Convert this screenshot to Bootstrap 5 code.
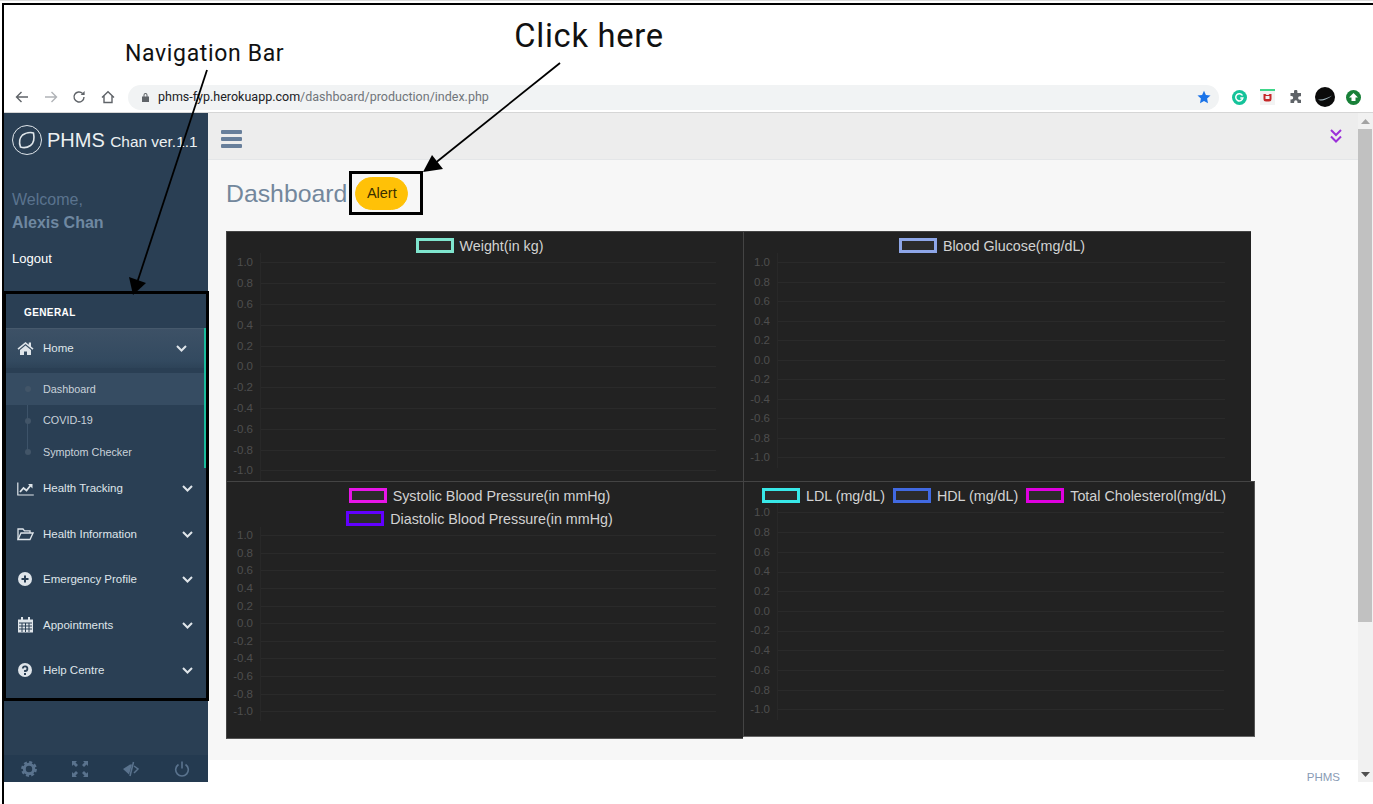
<!DOCTYPE html>
<html lang="en">
<head>
  <meta charset="UTF-8" />
  <meta name="viewport" content="width=device-width, initial-scale=1" />
  <title>PHMS Dashboard</title>
  <link href="https://cdn.jsdelivr.net/npm/bootstrap@5.3.3/dist/css/bootstrap.min.css" rel="stylesheet" />
  <style>
    html,body{height:804px;overflow:hidden;background:#fff;}
    body{font-family:"Liberation Sans",Arial,sans-serif;padding:3px 0 0 2px;position:relative;box-shadow:inset 0 1px #ddd;}
    .shot{height:801px;border-top:2px solid #000;border-left:2px solid #000;}

    /* annotation header */
    .note-row{height:79px;font-family:Roboto,sans-serif;color:#111;}
    .note-nav{font-size:23px;letter-spacing:.65px;margin:34px 0 0 121px;line-height:30px;}
    .note-click{font-size:32.7px;letter-spacing:.7px;margin:12px 0 0 230px;line-height:38px;}
    .notes-layer{position:absolute;left:0;top:0;pointer-events:none;}

    /* browser toolbar */
    .chrome-bar{height:29px;border-bottom:1px solid #d6d6d6;padding-bottom:2px;}
    .chrome-btn{width:14px;height:14px;color:#5f6368;}
    .chrome-nav{gap:14.6px;margin-left:11px;width:113px;}
    .omni{width:1091px;height:25px;background:#f1f3f4;border-radius:13px;padding:0 8px 0 13px;font-family:Roboto,sans-serif;font-size:12.5px;color:#70757a;}
    .omni b{font-weight:400;color:#202124;}
    .ext-row{margin-left:6px;}
    .ext-cell{width:28.5px;display:flex;justify-content:center;}

    /* app */
    .app{height:669px;}
    .side{width:204px;background:#2a3f54;color:#e7ebef;flex:none;}
    .brand{height:55px;padding:0 0 1px 8px;gap:5px;color:#ecf0f1;}
    .brand-big{font-size:20px;}
    .brand-small{font-size:15.4px;margin-left:1px;}
    .who{padding-left:8px;height:127px;}
    .who-hello{font-size:16px;line-height:23px;color:#5a738e;margin-top:20px;}
    .who-name{font-size:16px;line-height:23px;color:#6f88a1;font-weight:700;}
    .who-out{display:block;font-size:13px;line-height:16px;color:#fff;margin-top:17px;text-decoration:none;}
    .menu-title{height:34px;font-size:10px;font-weight:700;letter-spacing:.4px;color:#fff;padding:11px 0 0 20px;margin-top:-1px;}
    .menu-open{border-right:2px solid #1abb9c;margin:0 2px -2px 2px;height:140px;}
    .menu-head{height:40px;background:linear-gradient(#3d5166,#334a60 80%,#2d4358);border-top:1px solid #46596c;}
    .menu-row{height:45.5px;margin-left:2px;margin-right:4px;}
    .menu-row,.menu-head{display:flex;align-items:center;font-size:11.5px;color:#dfe5ea;padding-left:11px;text-decoration:none;}
    .menu-icon{width:17px;height:16px;margin-right:9px;flex:none;}
    .menu-caret{width:11px;height:7px;margin-left:auto;margin-right:11px;color:#dfe5ea;}
    .menu-head .menu-caret{margin-right:17px;}
    .menu-sub{padding-top:5px;position:relative;}
    .menu-sub::before{content:"";position:absolute;left:21px;top:5px;bottom:16px;width:1px;background:#3d5369;}
    .sub-row{height:31.5px;display:flex;align-items:center;font-size:10.8px;color:#c9d2da;padding-left:37px;position:relative;text-decoration:none;}
    .sub-row::before{content:"";position:absolute;left:18.5px;top:13px;width:6px;height:6px;border-radius:50%;background:#425568;}
    .sub-on{background:#364c62;}
    .side-tools{height:27px;background:#243a50;margin-top:auto;color:#5a738e;}
    .tool{width:51px;display:flex;justify-content:center;position:relative;left:-1px;}
    .tool svg{width:16px;height:16px;}

    .work{background:#fff;min-width:0;}
    .top-strip{height:47px;background:#ededed;border-bottom:1px solid #e4e6e8;padding:0 16px 0 13px;}
    .burger{width:21px;height:18px;color:#687f9b;margin-top:5px;}
    .dbl{width:12px;height:14px;color:#9b30d9;}
    .body-pane{height:600px;background:#f7f7f7;padding:17px 0 0 18px;}
    .page-head{height:54px;align-items:flex-start;gap:8px;}
    .page-name{font-size:24.8px;line-height:34px;color:#73879c;margin:0;font-weight:400;}
    .alert-pill{--bs-btn-padding-x:0;--bs-btn-padding-y:0;--bs-btn-font-size:14.5px;width:53px;height:33px;line-height:31px;color:#3a3000;}
    .foot-strip{height:22px;font-size:11.5px;color:#8a9bb5;text-align:right;padding-right:18px;line-height:35px;}

    /* charts */
    .plot-panel{background:#222;border-top:1px solid #444;border-left:1px solid #444;flex:none;position:relative;}
    .p1{width:517px;height:250px;--tick:20.8px;--lg:20.6px;--gap-end:27px;}
    .p2{width:508px;height:250px;--tick:19.5px;--lg:21.2px;--gap-end:26px;}
    .p3{width:517px;height:258px;--tick:17.6px;--lg:45px;--gap-end:27px;border-bottom:1px solid #555;}
    .p4{width:512px;height:256px;--tick:19.7px;--lg:21.1px;--gap-end:30px;border-right:1px solid #555;border-bottom:1px solid #666;}
    .lg-box{height:var(--lg);padding:6px 11px 0 0;font-size:14.3px;line-height:16px;color:#d2d2d2;}
    .p4 .lg-box{padding-right:10px;}
    .lg-line{height:16px;gap:6px;margin-bottom:7px;}
    .lg-swatch{width:38px;height:15px;border:3px solid;background:#2b2b2b;flex:none;}
    .lg-gap{margin-left:2px;}
    .tick-row{height:var(--tick);display:flex;align-items:stretch;font-size:11.5px;color:#4e4e4e;}
    .tick-num{width:26px;text-align:right;align-self:center;flex:none;}
    .tick-cell{flex:1;margin:0 var(--gap-end) 0 7px;display:flex;align-items:center;border-left:1px solid #282828;}
    .tick-cell i{display:block;width:100%;height:1px;background:#2a2a2a;}

    /* scrollbar */
    .fake-scroll{width:15px;background:#f1f1f1;flex:none;}
    .scroll-end{height:16px;color:#6b6b6b;}
    .scroll-thumb{height:493px;background:#c1c1c1;margin:0 1px 0 0;}
  </style>
</head>
<body>
<div class="shot d-flex flex-column">

  <div class="note-row d-flex">
    <div class="note-nav">Navigation Bar</div>
    <div class="note-click">Click here</div>
  </div>

  <div class="chrome-bar d-flex align-items-center">
    <div class="chrome-nav d-flex align-items-center">
      <svg class="chrome-btn" viewBox="0 0 14 14" fill="none" stroke="currentColor" stroke-width="1.4"><path d="M13 7H1.5M6.5 2 1.5 7l5 5"/></svg>
      <svg class="chrome-btn" viewBox="0 0 14 14" fill="none" stroke="#b0b3b7" stroke-width="1.4"><path d="M1 7h11.5M7.5 2l5 5-5 5"/></svg>
      <svg class="chrome-btn" viewBox="0 0 14 14" fill="none" stroke="currentColor" stroke-width="1.4"><path d="M12 7a5 5 0 1 1-1.4-3.5"/><path d="M12.6 1v4h-4" fill="currentColor" stroke="none"/></svg>
      <svg class="chrome-btn" viewBox="0 0 14 14" fill="none" stroke="currentColor" stroke-width="1.4"><path d="M1 7.5 7 1.8l6 5.7M3 6v6.5h8V6"/></svg>
    </div>
    <div class="omni d-flex align-items-center">
      <svg width="9" height="10" viewBox="0 0 9 10" class="me-2"><path fill="#5f6368" d="M1 4.5h7V10H1zM2.5 4.5V3a2 2 0 0 1 4 0v1.5H5.5V3a1 1 0 0 0-2 0v1.5z"/></svg>
      <span><b>phms-fyp.herokuapp.com</b>/dashboard/production/index.php</span>
      <svg class="ms-auto" width="14" height="14" viewBox="0 0 14 14"><path fill="#1a73e8" d="m7 .8 1.9 4.2 4.6.5-3.4 3.1.9 4.6L7 10.9l-4 2.3.9-4.6L.5 5.5 5.1 5z"/></svg>
    </div>
    <div class="ext-row d-flex align-items-center">
      <div class="ext-cell"><svg width="15" height="15" viewBox="0 0 15 15"><circle cx="7.5" cy="7.5" r="7.5" fill="#15c39a"/><path d="M10.5 5.5a3.6 3.6 0 1 0 .4 2.4H8.3" fill="none" stroke="#fff" stroke-width="1.5"/></svg></div>
      <div class="ext-cell"><svg width="15" height="16" viewBox="0 0 15 16"><rect width="15" height="16" fill="#f3f3f3"/><rect width="15" height="2" fill="#3fd68a"/><path d="M3.5 5h2l1 1h2l1-1h2v5a2.5 2.5 0 0 1-2.5 2.5h-3A2.5 2.5 0 0 1 3.5 10z" fill="#c62828"/><rect x="5.5" y="7" width="4" height="3" fill="#f3f3f3"/></svg></div>
      <div class="ext-cell"><svg width="14" height="14" viewBox="0 0 14 14"><path fill="#5f6368" d="M5 1.5a1.7 1.7 0 0 1 3.4 0V3H12v3.3h-1.200a1.700 1.700 0 0 0 0 3.400H12V13H8.500v-1a1.700 1.700 0 0 0-3.400 0v1H1.500V9.500h1a1.700 1.700 0 0 0 0-3.400h-1V3H5z"/></svg></div>
      <div class="ext-cell"><svg width="20" height="20" viewBox="0 0 20 20"><circle cx="10" cy="10" r="10" fill="#0b0b0b"/><path d="M3 12.5c5 .5 10-2 14-4-3 3-9 5.500-12 5z" fill="#9fb4bd"/></svg></div>
      <div class="ext-cell"><svg width="15" height="15" viewBox="0 0 15 15"><circle cx="7.5" cy="7.5" r="7.5" fill="#188038"/><path d="M7.5 3 12 7.5H9.5V11h-4V7.5H3z" fill="#fff"/></svg></div>
    </div>
  </div>

  <div class="app d-flex">
    <aside class="side d-flex flex-column">
      <div class="brand d-flex align-items-center">
        <svg width="30" height="30" viewBox="0 0 30 30" fill="none" stroke="#dfe5ea"><circle cx="15" cy="15" r="14.5"/><path stroke-width="1.6" d="M8.5 22c-1.5-4-1-9 2-12 3-2 8-3 11-2 1 5 .5 10-3 12.5-3 2-7 2.5-10 1.500z"/></svg>
        <span class="text-nowrap"><span class="brand-big">PHMS</span> <span class="brand-small">Chan ver.1.1</span></span>
      </div>
      <div class="who">
        <div class="who-hello">Welcome,</div>
        <div class="who-name">Alexis Chan</div>
        <a class="who-out" href="#">Logout</a>
      </div>
      <div class="menu-title">GENERAL</div>
      <div class="menu-open">
        <a class="menu-head" href="#">
          <svg class="menu-icon" viewBox="0 0 17 16" fill="currentColor"><path d="M8.5 1 .5 7.5l1 1.2 7-5.7 7 5.7 1-1.2-2.500-2V1.500h-2.200v2.200z"/><path d="m8.500 4.500 5.500 4.500v5h-4v-3.500H7V14H3V9z"/></svg>
          Home
          <svg class="menu-caret" viewBox="0 0 11 7" fill="none" stroke="currentColor" stroke-width="2"><path d="m1 1 4.5 4.5L10 1"/></svg>
        </a>
        <div class="menu-sub">
          <a class="sub-row sub-on" href="#">Dashboard</a>
          <a class="sub-row" href="#">COVID-19</a>
          <a class="sub-row" href="#">Symptom Checker</a>
        </div>
      </div>
      <a class="menu-row" href="#">
        <svg class="menu-icon" viewBox="0 0 17 16" fill="none" stroke="currentColor"><path stroke-width="1.2" d="M.8 1.5v12.500h16"/><path stroke-width="1.8" d="m3 11 3.5-4 3 2.5 4-5"/><path fill="currentColor" stroke="none" d="M11 3h4.5v4.5z"/></svg>
        Health Tracking
        <svg class="menu-caret" viewBox="0 0 11 7" fill="none" stroke="currentColor" stroke-width="2"><path d="m1 1 4.5 4.5L10 1"/></svg>
      </a>
      <a class="menu-row" href="#">
        <svg class="menu-icon" viewBox="0 0 17 16" fill="none" stroke="currentColor" stroke-width="1.3"><path d="M1 13.5V3h5l1.5 1.8H13v2.200"/><path d="M1 13.5 4 7h12l-3 6.5z"/></svg>
        Health Information
        <svg class="menu-caret" viewBox="0 0 11 7" fill="none" stroke="currentColor" stroke-width="2"><path d="m1 1 4.5 4.5L10 1"/></svg>
      </a>
      <a class="menu-row" href="#">
        <svg class="menu-icon" viewBox="0 0 17 16"><circle cx="8" cy="7" r="7" fill="currentColor"/><path d="M8 3.5v7M4.5 7h7" stroke="#2a3f54" stroke-width="2"/></svg>
        Emergency Profile
        <svg class="menu-caret" viewBox="0 0 11 7" fill="none" stroke="currentColor" stroke-width="2"><path d="m1 1 4.5 4.5L10 1"/></svg>
      </a>
      <a class="menu-row" href="#">
        <svg class="menu-icon" viewBox="0 0 17 16" fill="currentColor"><path d="M1 2.5h15v13H1z"/><path d="M4 0h2v4H4zM11 0h2v4h-2z"/><path stroke="#2a3f54" fill="none" d="M2 6h13M2 9h13M2 12h13M5 6v9M8.5 6v9M12 6v9"/></svg>
        Appointments
        <svg class="menu-caret" viewBox="0 0 11 7" fill="none" stroke="currentColor" stroke-width="2"><path d="m1 1 4.5 4.5L10 1"/></svg>
      </a>
      <a class="menu-row" href="#">
        <svg class="menu-icon" viewBox="0 0 17 16"><circle cx="8" cy="7" r="7" fill="currentColor"/><path d="M5.8 5.5A2.3 2.3 0 1 1 8 8v1" fill="none" stroke="#2a3f54" stroke-width="1.8"/><rect x="7" y="10" width="2" height="2" fill="#2a3f54"/></svg>
        Help Centre
        <svg class="menu-caret" viewBox="0 0 11 7" fill="none" stroke="currentColor" stroke-width="2"><path d="m1 1 4.5 4.5L10 1"/></svg>
      </a>
      <div class="side-tools d-flex align-items-center">
        <div class="tool"><svg viewBox="0 0 16 16"><circle cx="8" cy="8" r="4.7" fill="none" stroke="currentColor" stroke-width="3"/><circle cx="8" cy="8" r="6.7" fill="none" stroke="currentColor" stroke-width="2.4" stroke-dasharray="3 2.26"/></svg></div>
        <div class="tool"><svg viewBox="0 0 16 16" fill="currentColor"><path d="M0 0h5L3.5 1.5 6 4 4 6 1.5 3.5 0 5zM16 0v5l-1.5-1.5L12 6l-2-2 2.500-2.500L11 0zM0 16v-5l1.500 1.500L4 10l2 2-2.500 2.500L5 16zM16 16h-5l1.500-1.500L10 12l2-2 2.500 2.500L16 11z"/></svg></div>
        <div class="tool"><svg viewBox="0 0 16 16" fill="none" stroke="currentColor" stroke-width="1.5"><path fill="currentColor" stroke="none" d="M0 8 7 3.5h2L6 13.5 0 8z"/><path d="M11 5l4 3-4 4"/><path d="M10.5 1 7 15"/></svg></div>
        <div class="tool"><svg viewBox="0 0 16 16" fill="none" stroke="currentColor" stroke-width="1.6"><path d="M4.5 3.5a6.3 6.3 0 1 0 7 0M8 .5v7"/></svg></div>
      </div>
    </aside>

    <div class="work flex-grow-1 d-flex flex-column">
      <div class="top-strip d-flex align-items-center justify-content-between">
        <svg class="burger" viewBox="0 0 21 18" fill="currentColor"><rect width="21" height="4" rx="1"/><rect y="7" width="21" height="4" rx="1"/><rect y="14" width="21" height="4" rx="1"/></svg>
        <svg class="dbl" viewBox="0 0 12 14" fill="none" stroke="currentColor" stroke-width="2"><path d="m1 1 5 5 5-5M1 7.5l5 5 5-5"/></svg>
      </div>
      <main class="body-pane">
        <div class="page-head d-flex">
          <h3 class="page-name">Dashboard</h3>
          <button type="button" class="btn btn-warning rounded-pill alert-pill">Alert</button>
        </div>
        <div class="d-flex align-items-start">
          <div class="plot-panel p1">
            <div class="lg-box"><div class="lg-line d-flex justify-content-center"><span class="lg-swatch sw-teal"></span><span>Weight(in kg)</span></div></div>
            <div class="plot-rows"></div>
          </div>
          <div class="plot-panel p2">
            <div class="lg-box"><div class="lg-line d-flex justify-content-center"><span class="lg-swatch sw-peri"></span><span>Blood Glucose(mg/dL)</span></div></div>
            <div class="plot-rows"></div>
          </div>
        </div>
        <div class="d-flex align-items-start">
          <div class="plot-panel p3">
            <div class="lg-box">
              <div class="lg-line d-flex justify-content-center"><span class="lg-swatch sw-pink"></span><span>Systolic Blood Pressure(in mmHg)</span></div>
              <div class="lg-line d-flex justify-content-center"><span class="lg-swatch sw-violet"></span><span>Diastolic Blood Pressure(in mmHg)</span></div>
            </div>
            <div class="plot-rows"></div>
          </div>
          <div class="plot-panel p4">
            <div class="lg-box"><div class="lg-line d-flex justify-content-center">
              <span class="lg-swatch sw-cyan"></span><span>LDL (mg/dL)</span>
              <span class="lg-swatch sw-blue lg-gap"></span><span>HDL (mg/dL)</span>
              <span class="lg-swatch sw-mag lg-gap"></span><span>Total Cholesterol(mg/dL)</span>
            </div></div>
            <div class="plot-rows"></div>
          </div>
        </div>
      </main>
      <div class="foot-strip">PHMS</div>
    </div>

    <div class="fake-scroll d-flex flex-column">
      <div class="scroll-end d-flex align-items-center justify-content-center"><svg width="9" height="5" viewBox="0 0 9 5"><path fill="#a3a3a3" d="M4.5 0 9 5H0z"/></svg></div>
      <div class="scroll-thumb"></div>
      <div class="scroll-end d-flex align-items-center justify-content-center mt-auto"><svg width="9" height="5" viewBox="0 0 9 5"><path fill="#505050" d="M0 0h9L4.5 5z"/></svg></div>
    </div>
  </div>
</div>

<!-- arrows and boxes drawn over the screenshot -->
<svg class="notes-layer" width="1373" height="804" viewBox="0 0 1373 804" fill="none" stroke="#000">
  <rect x="4.5" y="292.5" width="203" height="407" stroke-width="3"/>
  <rect x="350.5" y="172.5" width="71" height="41" stroke-width="3"/>
  <path d="M207 70 137 283" stroke-width="1.8"/>
  <path d="M133 295 129 277 146 283z" fill="#000" stroke="none"/>
  <path d="M560 63 434 164" stroke-width="1.8"/>
  <path d="M423 172 432 155 443 169z" fill="#000" stroke="none"/>
</svg>

<script>
// legend colours and y axis rows for the four empty charts
const swatch={'sw-teal':'#7fe5ce','sw-peri':'#8ea6e8','sw-pink':'#e815e8','sw-violet':'#6200ff','sw-cyan':'#38e8e8','sw-blue':'#4169e1','sw-mag':'#e000e0'};
Object.keys(swatch).forEach(k=>document.querySelectorAll('.'+k).forEach(el=>el.style.borderColor=swatch[k]));
document.querySelectorAll('.plot-rows').forEach(box=>{
  let html='';
  for(let i=10;i>=-10;i-=2){
    html+=`<div class="tick-row"><span class="tick-num">${(i/10).toFixed(1)}</span><div class="tick-cell"><i></i></div></div>`;
  }
  box.innerHTML=html;
});
</script>
<script src="https://cdn.jsdelivr.net/npm/bootstrap@5.3.3/dist/js/bootstrap.bundle.min.js"></script>
</body>
</html>
